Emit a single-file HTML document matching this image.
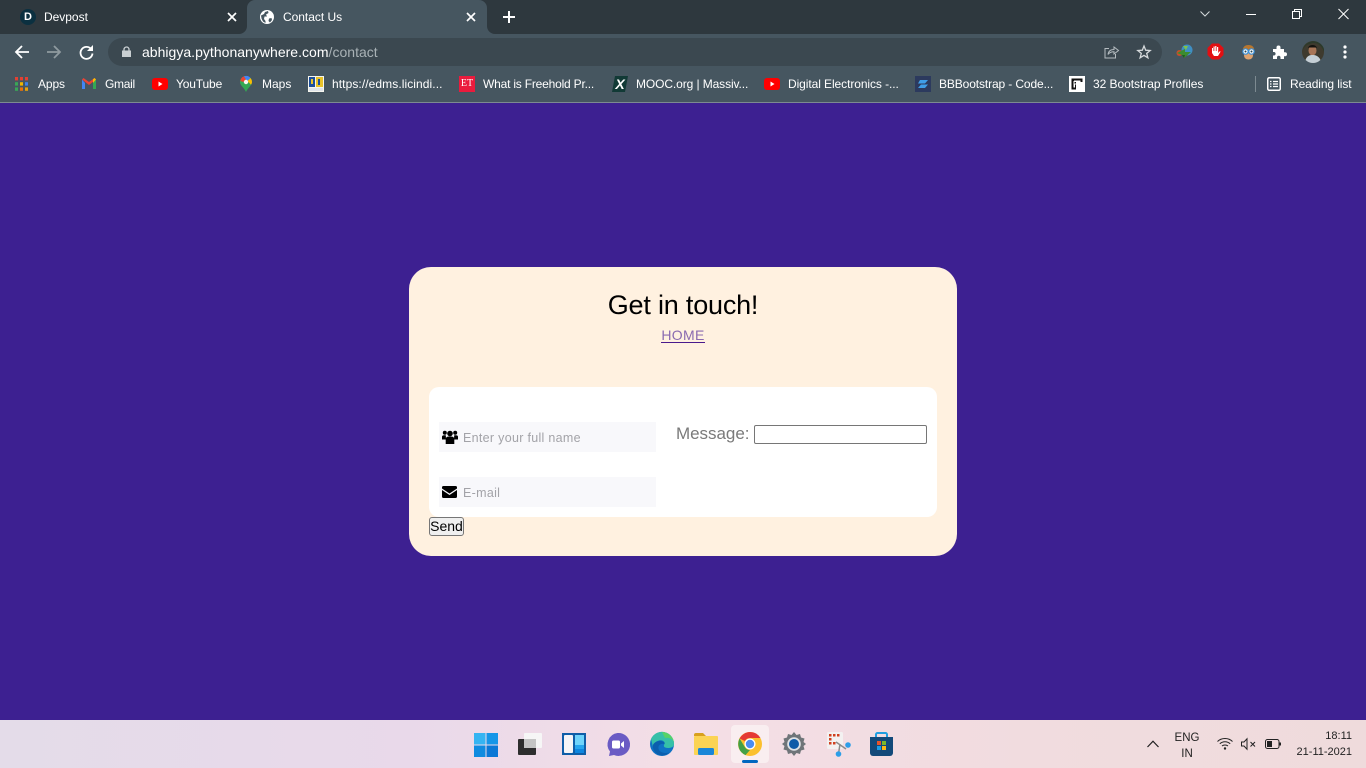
<!DOCTYPE html>
<html><head><meta charset="utf-8"><title>Contact Us</title>
<style>
html,body{margin:0;padding:0;width:1366px;height:768px;overflow:hidden;background:#3d2091;font-family:"Liberation Sans",sans-serif}
.a{position:absolute;white-space:nowrap}
.t{position:absolute;white-space:nowrap;color:#fff;font-size:12px;line-height:16px;height:16px}
svg{position:absolute;overflow:visible}
</style></head><body>
<!-- chrome -->
<div class="a" style="left:0;top:0;width:1366px;height:34px;background:#2e383e"></div>
<div class="a" style="left:0;top:34px;width:1366px;height:69px;background:#465660"></div>
<div class="a" style="left:0;top:102px;width:1366px;height:1px;background:#7d8a91"></div>
<div class="a" style="left:247px;top:0;width:240px;height:34px;background:#465660;border-radius:8px 8px 0 0"></div>
<div class="a" style="left:237px;top:24px;width:10px;height:10px;background:#465660"></div>
<div class="a" style="left:237px;top:24px;width:10px;height:10px;background:#2e383e;border-bottom-right-radius:8px"></div>
<div class="a" style="left:487px;top:24px;width:10px;height:10px;background:#465660"></div>
<div class="a" style="left:487px;top:24px;width:10px;height:10px;background:#2e383e;border-bottom-left-radius:8px"></div>
<div class="a" style="left:108px;top:38px;width:1054px;height:28px;background:#3b4850;border-radius:14px"></div>

<!-- tabs -->
<div class="a" style="left:20px;top:9px;width:16px;height:16px;border-radius:50%;background:#0b3040"></div>
<div class="t" style="left:20px;top:9px;width:16px;text-align:center;font-size:11px;font-weight:bold">D</div>
<div class="t" style="left:44px;top:9px;letter-spacing:-.02px">Devpost</div>
<svg style="left:227px;top:12px" width="10" height="10"><path d="M1 1L9 9M9 1L1 9" stroke="#fff" stroke-width="1.700"/></svg>
<svg style="left:260px;top:10px" width="14" height="14" viewBox="0 0 14 14"><circle cx="7" cy="7" r="7" fill="#fff"/><path d="M1 5.500L4 4L5 2L8 1L8.500 3L6 4.500L7 6.500L4.500 6.500L4 9L5.500 11L5.500 13L3 11.500L1.500 8.500ZM9 8.500L11.500 8L12 10L10 12.500L8.500 11Z" fill="#465660"/></svg>
<div class="t" style="left:283px;top:9px;letter-spacing:-.03px">Contact Us</div>
<svg style="left:466px;top:12px" width="10" height="10"><path d="M1 1L9 9M9 1L1 9" stroke="#fff" stroke-width="1.700"/></svg>
<svg style="left:503px;top:11px" width="12" height="12"><path d="M6 0V12M0 6H12" stroke="#fff" stroke-width="2"/></svg>

<!-- window controls -->
<svg style="left:1200px;top:11px" width="10" height="6"><path d="M.5.500L5 5L9.500.500" stroke="#d5dadc" fill="none"/></svg>
<div class="a" style="left:1246px;top:14px;width:10px;height:1px;background:#fff"></div>
<svg style="left:1292px;top:9px" width="10" height="10"><path d="M.5 2.500H7.500V9.500H.5ZM2.500 2.500V.5H9.500V7.500H7.500" stroke="#fff" fill="none"/></svg>
<svg style="left:1338px;top:9px" width="11" height="10"><path d="M.5 0L10.500 10M10.500 0L.5 10" stroke="#fff"/></svg>

<!-- nav -->
<svg style="left:14px;top:44px" width="16" height="16"><path d="M15 8H2M8 2L2 8L8 14" stroke="#fff" stroke-width="1.800" fill="none"/></svg>
<svg style="left:46px;top:44px" width="16" height="16"><path d="M1 8H14M8 2L14 8L8 14" stroke="#8f9a9f" stroke-width="1.800" fill="none"/></svg>
<svg style="left:79px;top:45px" width="15" height="15"><path d="M12.500 4.500A6 6 0 1 0 13.500 8.500" stroke="#fff" stroke-width="1.800" fill="none"/><path d="M14 0V6H8Z" fill="#fff"/></svg>
<svg style="left:122px;top:46px" width="9" height="11"><path d="M2 5V3.500A2.500 2.500 0 0 1 7 3.500V5" stroke="#c9cfd2" stroke-width="1.300" fill="none"/><rect x="0" y="4.500" width="9" height="6.500" fill="#c9cfd2"/></svg>
<div class="t" style="left:142px;top:44px;font-size:14px;line-height:17px;height:17px;letter-spacing:.02px">abhigya.pythonanywhere.com<span style="color:#a9b2b6">/contact</span></div>
<svg style="left:1104px;top:45px" width="15" height="14"><path d="M5 3.500H1V13H11.500V9" stroke="#b5bcc0" fill="none"/><path d="M4 9.500C4.500 6 7 4.500 10 4.500V2L14.500 5.500L10 9V6.800C7.500 6.800 5.500 7.500 4 9.500Z" stroke="#b5bcc0" fill="none"/></svg>
<svg style="left:1137px;top:45px" width="14" height="14" viewBox="0 0 14 14"><path d="M7 1L8.700 5.200L13.200 5.500L9.700 8.400L10.900 12.800L7 10.400L3.100 12.800L4.300 8.400L.8 5.500L5.300 5.200Z" stroke="#d6dadc" stroke-width="1.300" fill="none"/></svg>

<!-- extensions -->
<svg style="left:1176px;top:44px" width="17" height="16" viewBox="0 0 17 16"><ellipse cx="3.500" cy="9" rx="3" ry="3" fill="#c94f2a"/><circle cx="11" cy="6" r="5.500" fill="#3f8fc4"/><path d="M7 2L12 2L10 6Z" fill="#7fc34a"/><path d="M1 9L9 5V8H15L8 14L6 11Z" fill="#3d8c2f"/><path d="M8 14L6 11L9 11Z" fill="#1f5e1c"/></svg>
<svg style="left:1207px;top:43px" width="17" height="17" viewBox="0 0 17 17"><path d="M5 .5H12L16.500 5V12L12 16.500H5L.5 12V5Z" fill="#e20f12"/><path d="M5 8V5H6V8H6.500V3.500H7.700V8H8.200V3H9.400V8H10V4H11.200V10L13 8L13.500 8.800L11 13H7L5 10Z" fill="#fff"/></svg>
<svg style="left:1241px;top:44px" width="15" height="16" viewBox="0 0 15 16"><path d="M2 8C1 3 4 1 7.500 1S14 3 13 8Z" fill="#b7762e"/><path d="M3 8H12V11C12 14 10 15.500 7.500 15.500S3 14 3 11Z" fill="#e0a36f"/><circle cx="4.500" cy="7.500" r="2.700" fill="#fff" stroke="#3b8fd6" stroke-width="1.200"/><circle cx="10.500" cy="7.500" r="2.700" fill="#fff" stroke="#3b8fd6" stroke-width="1.200"/><circle cx="4.500" cy="7.500" r="1" fill="#245"/><circle cx="10.500" cy="7.500" r="1" fill="#245"/></svg>
<svg style="left:1273px;top:45px" width="14" height="14" viewBox="0 0 14 14"><path d="M0 4H3.500V2.500A2 2 0 0 1 7.500 2.500V4H11V7.200H12A2 2 0 0 1 12 11.200H11V14H7.500V12.500A1.700 1.700 0 0 0 4 12.500V14H0V10.500H1.200A1.800 1.800 0 0 0 1.200 7H0Z" fill="#fff"/></svg>
<svg style="left:1302px;top:41px" width="22" height="22" viewBox="0 0 22 22"><circle cx="11" cy="11" r="11" fill="#3e3a2e"/><path d="M0 11C2 6 5 3 8 3C13 0 20 4 22 11L22 8A11 11 0 0 0 1 8Z" fill="#2c3a2a"/><ellipse cx="10.500" cy="9.500" rx="4" ry="5" fill="#a87557"/><path d="M6 7C7 3 14 3 15 7L14 6.500H7Z" fill="#15130f"/><path d="M3.500 19C5 14.500 8 14 10.500 14S16.500 14.500 18.500 19A11 11 0 0 1 3.500 19Z" fill="#c5cfd6"/></svg>
<svg style="left:1343px;top:45px" width="4" height="14"><circle cx="2" cy="2" r="1.600" fill="#fff"/><circle cx="2" cy="7" r="1.600" fill="#fff"/><circle cx="2" cy="12" r="1.600" fill="#fff"/></svg>

<!-- bookmarks -->
<svg style="left:15px;top:77px" width="13" height="14" viewBox="0 0 13 14"><g><rect x="0" y="0" width="3" height="3.400" fill="#e34133"/><rect x="5" y="0" width="3" height="3.400" fill="#e34133"/><rect x="10" y="0" width="3" height="3.400" fill="#e34133"/><rect x="0" y="5.200" width="3" height="3.400" fill="#3aa757"/><rect x="5" y="5.200" width="3" height="3.400" fill="#f0b400"/><rect x="10" y="5.200" width="3" height="3.400" fill="#3f80e8"/><rect x="0" y="10.400" width="3" height="3.400" fill="#3aa757"/><rect x="5" y="10.400" width="3" height="3.400" fill="#e8710a"/><rect x="10" y="10.400" width="3" height="3.400" fill="#e8a20a"/></g></svg>
<div class="t" style="left:38px;top:76px;letter-spacing:-.1px">Apps</div>
<svg style="left:82px;top:78px" width="14" height="12" viewBox="0 0 14 12"><path d="M0 1.500V11H3V5Z" fill="#4285f4"/><path d="M14 1.500V11H11V5Z" fill="#34a853"/><path d="M0 1.500L7 7L14 1.500L12.500 0L7 4L1.500 0Z" fill="#ea4335"/><path d="M11 5L14 1.500L12.500 0L11 1.200Z" fill="#fbbc04"/></svg>
<div class="t" style="left:105px;top:76px;letter-spacing:-.3px">Gmail</div>
<svg style="left:152px;top:78px" width="16" height="12"><rect width="16" height="12" rx="3" fill="#f00"/><path d="M6.500 3.500L10.500 6L6.500 8.500Z" fill="#fff"/></svg>
<div class="t" style="left:176px;top:76px;letter-spacing:-.15px">YouTube</div>
<svg style="left:240px;top:76px" width="12" height="16" viewBox="0 0 12 16"><path d="M6 0A6 6 0 0 1 12 6C12 9.500 8 11.500 6 16C4 11.500 0 9.500 0 6A6 6 0 0 1 6 0Z" fill="#34a853"/><path d="M1.200 2.500A6 6 0 0 1 4 .3L6 3.500L3.500 6L.3 5Z" fill="#ea4335"/><path d="M4 .3A6 6 0 0 1 10.500 2L7.500 5L6 3.500Z" fill="#4285f4"/><path d="M10.500 2A6 6 0 0 1 12 6C12 7 11.500 8 11 8.700L7.500 5Z" fill="#fbbc04"/><circle cx="6" cy="6" r="2.200" fill="#f7f7f2"/></svg>
<div class="t" style="left:262px;top:76px">Maps</div>
<svg style="left:308px;top:76px" width="16" height="16"><rect width="16" height="16" fill="#f5f5ee"/><rect x="1" y="1" width="6" height="10" fill="#1d4f9c"/><rect x="8" y="1" width="7" height="10" fill="#e9c32a"/><rect x="1" y="12" width="14" height="3" fill="#dfe4ea"/><rect x="3" y="3" width="2" height="5" fill="#e9c32a"/><rect x="10" y="3" width="2" height="6" fill="#1d4f9c"/></svg>
<div class="t" style="left:332px;top:76px;letter-spacing:.08px">https://edms.licindi...</div>
<svg style="left:459px;top:76px" width="16" height="16"><rect width="16" height="16" fill="#ea1b3d"/></svg>
<div class="a" style="left:459px;top:76px;width:16px;height:16px;text-align:center;color:#fff;font:10px/16px 'Liberation Serif',serif">ET</div>
<svg style="left:612px;top:76px" width="16" height="16"><path d="M3 0H16L13 16H0Z" fill="#123a36"/></svg>
<div class="a" style="left:612px;top:76px;width:16px;text-align:center;color:#fff;font:italic bold 14px/16px 'Liberation Sans',sans-serif">X</div>
<div class="t" style="left:483px;top:76px;letter-spacing:-.2px">What is Freehold Pr...</div>
<div class="t" style="left:636px;top:76px;letter-spacing:-.1px">MOOC.org | Massiv...</div>
<svg style="left:764px;top:78px" width="16" height="12"><rect width="16" height="12" rx="3" fill="#f00"/><path d="M6.500 3.500L10.500 6L6.500 8.500Z" fill="#fff"/></svg>
<div class="t" style="left:788px;top:76px;letter-spacing:-.08px">Digital Electronics -...</div>
<svg style="left:915px;top:76px" width="16" height="16"><rect width="16" height="16" fill="#2c3a5e"/><path d="M5 4H13L10 7.500H3ZM6 8.500H13L10 12H3Z" fill="#3f9ee8"/></svg>
<div class="t" style="left:939px;top:76px;letter-spacing:-.12px">BBBootstrap - Code...</div>
<svg style="left:1069px;top:76px" width="16" height="16"><rect width="16" height="16" fill="#fff"/><path d="M2.500 2.500H13.500V6H7V13.500H2.500Z" fill="#111"/><path d="M5 5H11V5.500H5V11H5.500V8H10" stroke="#fff" fill="none"/></svg>
<div class="t" style="left:1093px;top:76px;letter-spacing:-.05px">32 Bootstrap Profiles</div>
<div class="a" style="left:1255px;top:76px;width:1px;height:16px;background:#7d8a91"></div>
<svg style="left:1267px;top:77px" width="14" height="14"><rect x=".75" y=".75" width="12.500" height="12.500" rx="1.500" stroke="#fff" stroke-width="1.500" fill="none"/><path d="M3 4.500H4.500M6 4.500H11M3 7H4.500M6 7H11M3 9.500H4.500M6 9.500H11" stroke="#fff" stroke-width="1.200"/></svg>
<div class="t" style="left:1290px;top:76px;letter-spacing:-.1px">Reading list</div>

<!-- card -->
<div class="a" style="left:409px;top:267px;width:548px;height:289px;background:#fff1e0;border-radius:22px"></div>
<div class="a" style="left:429px;top:387px;width:508px;height:130px;background:#fff;border-radius:10px"></div>
<div class="a" style="left:409px;top:289px;width:548px;text-align:center;font-size:27px;line-height:32px;color:#000;letter-spacing:-.2px">Get in touch!</div>
<div class="a" style="left:661px;top:326px;width:44px;text-align:center;font-size:14px;line-height:18px;color:#8a6ab0;border-bottom:1px solid #4a1a8c;height:16px;letter-spacing:.3px">HOME</div>

<div class="a" style="left:439px;top:422px;width:217px;height:30px;background:#f8f8fb"></div>
<div class="a" style="left:439px;top:477px;width:217px;height:30px;background:#f8f8fb"></div>
<svg style="left:442px;top:430px" width="16" height="14" viewBox="0 0 16 14"><circle cx="8" cy="3.500" r="2.800"/><circle cx="2.800" cy="2.800" r="2"/><circle cx="13.200" cy="2.800" r="2"/><path d="M0 9V7C0 5.500 1 5.300 3.800 5.300L4 9.500H0ZM16 9V7C16 5.500 15 5.300 12.200 5.300L12 9.500H16Z"/><path d="M3.700 14V9.500C3.700 7 5 6.500 8 6.500S12.300 7 12.300 9.500V14Z"/></svg>
<svg style="left:442px;top:486px" width="15" height="12" viewBox="0 0 15 12"><path d="M1.500 0H13.500A1.500 1.500 0 0 1 15 1.500V2.500L7.500 7.500L0 2.500V1.500A1.500 1.500 0 0 1 1.500 0Z"/><path d="M0 4L7.500 9L15 4V10.500A1.500 1.500 0 0 1 13.500 12H1.500A1.500 1.500 0 0 1 0 10.500Z"/></svg>
<div class="a" style="left:463px;top:430px;font-size:12.500px;line-height:16px;color:#a3a3a8;letter-spacing:.3px">Enter your full name</div>
<div class="a" style="left:463px;top:485px;font-size:12.500px;line-height:16px;color:#a3a3a8;letter-spacing:.3px">E-mail</div>
<div class="a" style="left:676px;top:424px;font-size:17px;line-height:20px;color:#7a7a7a;letter-spacing:-.03px">Message:</div>
<div class="a" style="left:754px;top:425px;width:171px;height:17px;border:1px solid #767676;border-radius:2px;background:#fff"></div>
<div class="a" style="left:429px;top:517px;width:33px;height:17px;border:1px solid #767676;border-radius:3px;background:#efefef;font-size:14px;line-height:17px;text-align:center;color:#000">Send</div>

<!-- taskbar -->
<div class="a" style="left:0;top:720px;width:1366px;height:48px;background:linear-gradient(90deg,#e4dce9 0%,#e9d9ea 30%,#f4dee6 50%,#f1dcdf 75%,#efdbdc 100%)"></div>
<div class="a" style="left:731px;top:725px;width:38px;height:38px;background:#f9eef0;border-radius:4px"></div>
<div class="a" style="left:742px;top:760px;width:16px;height:3px;background:#0067c0;border-radius:2px"></div>

<svg style="left:474px;top:733px" width="24" height="24"><rect width="11.500" height="11.500" fill="#35b4f2"/><rect x="12.500" width="11.500" height="11.500" fill="#1596e8"/><rect y="12.500" width="11.500" height="11.500" fill="#0f8be0"/><rect x="12.500" y="12.500" width="11.500" height="11.500" fill="#0a78d6"/></svg>
<svg style="left:518px;top:733px" width="24" height="22"><rect y="6" width="18" height="16" rx="1" fill="#2e2e2e"/><rect x="6" y="0" width="18" height="15" rx="1" fill="#f6f6f6"/><rect x="6" y="6" width="12" height="9" fill="#c4c4c4"/></svg>
<svg style="left:562px;top:733px" width="24" height="22"><rect width="24" height="22" fill="#0f5ea8"/><rect x="2" y="2" width="9" height="18" rx="1" fill="#f5f5f7"/><rect x="13" y="2" width="9" height="10" fill="#6fd4fb"/><rect x="13" y="12" width="9" height="4" fill="#25a5ee"/><rect x="13" y="16" width="9" height="4" fill="#0e86e0"/></svg>
<svg style="left:606px;top:733px" width="23" height="23" viewBox="0 0 23 23"><path d="M11.500 0A11.500 11.500 0 1 1 8 22L3 23L4 18.500A11.500 11.500 0 0 1 11.500 0Z" fill="#6a5bc4"/><rect x="6" y="7.500" width="8" height="8" rx="1.500" fill="#fff"/><path d="M15 10.500L18 8V15L15 12.500Z" fill="#fff"/></svg>
<svg style="left:650px;top:732px" width="24" height="24" viewBox="0 0 24 24"><circle cx="12" cy="12" r="12" fill="#0f72c4"/><path d="M1 7A12 12 0 0 1 24 12C24 15 21 16 18 16C14 16 13 14 14.500 12C15.500 10 12.500 7.500 9 8.500C5 9.500 3.500 12 3 15Z" fill="#36c0a8"/><path d="M12 0A12 12 0 0 1 24 12C24 8 20 5 15 6Z" fill="#57d366"/><path d="M14.500 12C11 11 8 13 8.500 16.500C9 20 14 22 19 20.500C16 24 9 25 5 20C2 16 3 13 3 13C4 10 9 8 12.500 9.500C14 10 15 11 14.500 12Z" fill="#0b5fae"/></svg>
<svg style="left:694px;top:733px" width="24" height="22"><path d="M0 2A2 2 0 0 1 2 0H9L12 3H0Z" fill="#d8a01e"/><rect y="3" width="24" height="19" rx="1" fill="#fbd354"/><rect x="4" y="15" width="16" height="7" rx="1.500" fill="#1a86d8"/></svg>
<svg style="left:738px;top:732px" width="24" height="24" viewBox="0 0 24 24"><circle cx="12" cy="12" r="12" fill="#fbc02d"/><path d="M12 0A12 12 0 0 1 22.400 6H12A6 6 0 0 0 6.800 9L1.600 6.500A12 12 0 0 1 12 0Z" fill="#e53935"/><path d="M1.600 6.500L6.800 15A6 6 0 0 0 12 18L7.500 23.100A12 12 0 0 1 1.600 6.500Z" fill="#43a047"/><circle cx="12" cy="12" r="5.500" fill="#fff"/><circle cx="12" cy="12" r="4.200" fill="#4a8df0"/></svg>
<svg style="left:782px;top:732px" width="24" height="24" viewBox="0 0 24 24"><path d="M12 0L14.500 3L18 2L19 5.500L22.500 6.500L21.500 10L24 12L21.500 14L22.500 17.500L19 18.500L18 22L14.500 21L12 24L9.500 21L6 22L5 18.500L1.500 17.500L2.500 14L0 12L2.500 10L1.500 6.500L5 5.500L6 2L9.500 3Z" fill="#6f7579"/><circle cx="12" cy="12" r="6.800" fill="#dfe3e6"/><circle cx="12" cy="12" r="5" fill="#0f5ca8"/></svg>
<svg style="left:826px;top:732px" width="25" height="25" viewBox="0 0 25 25"><rect x="1" y="0" width="16" height="17" rx="1.500" fill="#f3f1f1"/><g fill="#d0401e"><rect x="3" y="2" width="2.500" height="2.500"/><rect x="7" y="2" width="2.500" height="2.500"/><rect x="11" y="2" width="2.500" height="2.500"/><rect x="3" y="6" width="2.500" height="2.500"/><rect x="3" y="10" width="2.500" height="2.500"/><rect x="7" y="10" width="2.500" height="2.500"/></g><path d="M10 10L20 17M14 12L12.500 22" stroke="#8c8c8c" stroke-width="1.500"/><circle cx="22" cy="13" r="2.800" fill="#2c9ee8"/><circle cx="12.500" cy="22" r="2.800" fill="#2c9ee8"/></svg>
<svg style="left:870px;top:732px" width="23" height="24" viewBox="0 0 23 24"><path d="M6 6V2.500A1.500 1.500 0 0 1 7.500 1H15.500A1.500 1.500 0 0 1 17 2.500V6" stroke="#1f9ee0" stroke-width="2" fill="none"/><path d="M0 5H23V21A3 3 0 0 1 20 24H3A3 3 0 0 1 0 21Z" fill="#134a7a"/><rect x="7" y="9" width="4" height="4" fill="#e8542a"/><rect x="12" y="9" width="4" height="4" fill="#7cb82a"/><rect x="7" y="14" width="4" height="4" fill="#1a9ee8"/><rect x="12" y="14" width="4" height="4" fill="#fcb914"/></svg>

<!-- tray -->
<svg style="left:1147px;top:740px" width="12" height="8"><path d="M.5 7L6 1.200L11.500 7" stroke="#1f1f1f" stroke-width="1.200" fill="none"/></svg>
<div class="a" style="left:1170px;top:730px;width:34px;text-align:center;font-size:11.500px;line-height:16px;color:#222">ENG</div>
<div class="a" style="left:1170px;top:746px;width:34px;text-align:center;font-size:11.500px;line-height:16px;color:#222">IN</div>
<svg style="left:1217px;top:737px" width="16" height="13" viewBox="0 0 16 13"><path d="M.5 4.500C4.500.5 11.500.5 15.500 4.500M2.800 6.800C5.500 4 10.500 4 13.200 6.800M5 9C6.500 7.700 9.500 7.700 11 9" stroke="#222" fill="none"/><circle cx="8" cy="11.500" r="1.200" fill="#222"/></svg>
<svg style="left:1241px;top:738px" width="16" height="12" viewBox="0 0 16 12"><path d="M.5 4H3L6 .8V11.200L3 8H.5Z" stroke="#222" fill="none"/><path d="M9.500 4L14 8.500M14 4L9.500 8.500" stroke="#222"/></svg>
<svg style="left:1265px;top:739px" width="16" height="10" viewBox="0 0 16 10"><rect x=".5" y=".5" width="13.500" height="9" rx="2" stroke="#222" fill="none"/><rect x="2" y="2" width="5" height="6" fill="#222"/><rect x="14.500" y="3.500" width="1.500" height="3" fill="#222"/></svg>
<div class="a" style="left:1290px;top:728px;width:62px;text-align:right;font-size:11px;line-height:16px;color:#222">18:11</div>
<div class="a" style="left:1290px;top:744px;width:62px;text-align:right;font-size:11px;line-height:16px;color:#222">21-11-2021</div>
</body></html>
